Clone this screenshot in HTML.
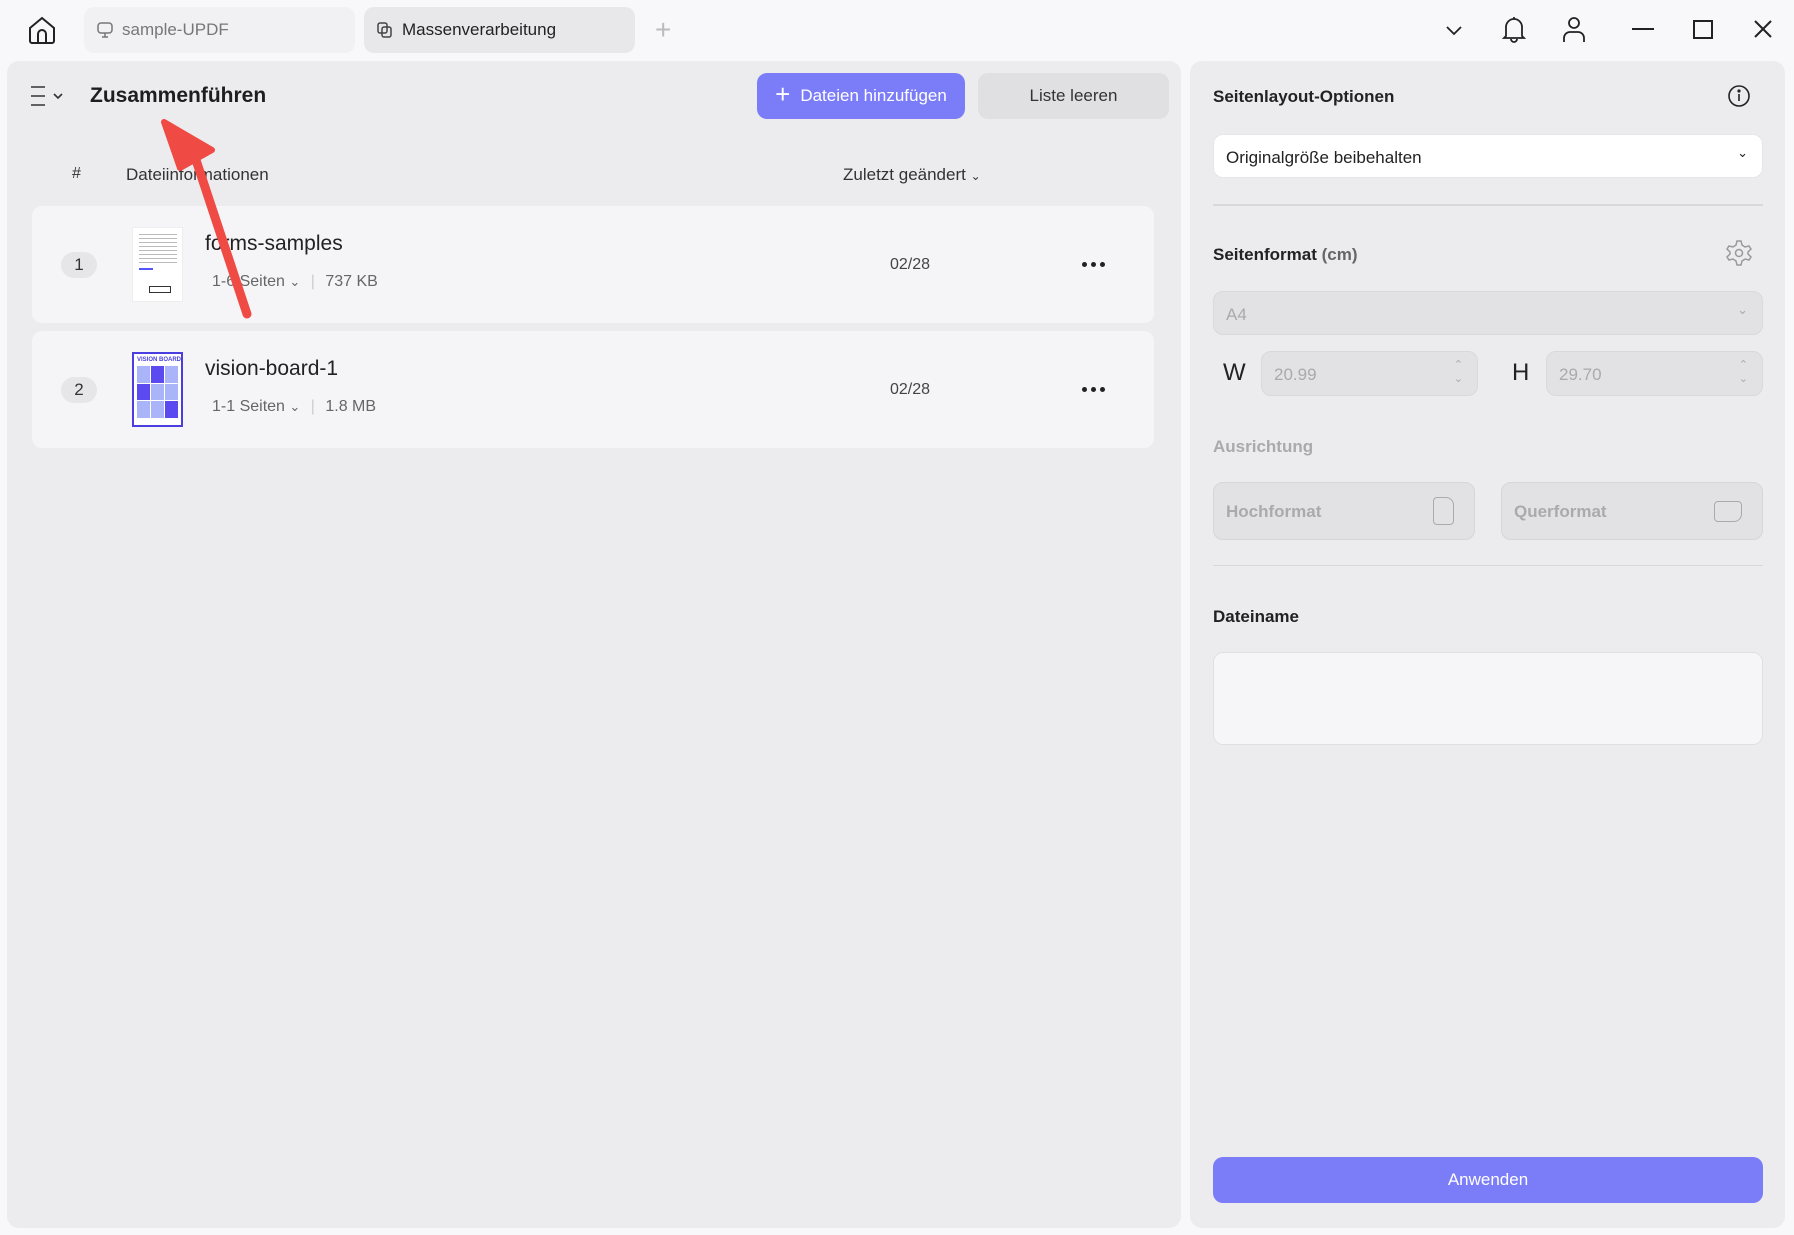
<!DOCTYPE html>
<html><head><meta charset="utf-8"><style>
*{box-sizing:border-box;margin:0;padding:0}
body{width:1794px;height:1235px;background:#f8f8fa;font-family:"Liberation Sans",sans-serif;color:#222;position:relative;overflow:hidden;font-size:17px}
.a{position:absolute}
.tab{position:absolute;top:7px;height:46px;border-radius:10px;display:flex;align-items:center;padding-left:12px;font-size:17px}
.panel{position:absolute;background:#ececee;border-radius:12px}
.row{position:absolute;left:32px;width:1122px;height:117px;background:#f5f5f7;border-radius:10px}
.badge{position:absolute;left:29px;top:46px;width:36px;height:26px;border-radius:13px;background:#e6e6e8;text-align:center;line-height:26px;font-size:17px;color:#333}
.name{position:absolute;left:173px;font-size:21px;color:#222}
.meta{position:absolute;left:180px;font-size:16px;color:#666}
.date{position:absolute;left:858px;font-size:16px;color:#444}
.dots{position:absolute;left:1050px;top:56px;display:flex;gap:4px}
.dots i{width:5px;height:5px;border-radius:50%;background:#222;display:block}
.h{position:absolute;left:1213px;font-weight:bold;font-size:17px;color:#222}
.box{position:absolute;border-radius:10px}
</style></head><body>
<svg class="a" style="left:27px;top:15px" width="30" height="30" viewBox="0 0 30 30" fill="none" stroke="#222" stroke-width="2"><path d="M3 13 L15 3 L27 13 V26 a2 2 0 0 1 -2 2 H5 a2 2 0 0 1 -2 -2Z"/><path d="M11 28 V19 a4 4 0 0 1 8 0 V28"/></svg>
<div class="tab" style="left:84px;width:271px;background:#f1f1f3;color:#777"><svg width="18" height="18" viewBox="0 0 18 18" fill="none" stroke="#777" stroke-width="1.5"><rect x="2" y="2" width="14" height="10" rx="3"/><path d="M9 12v4M6 16h6"/></svg><span style="margin-left:8px">sample-UPDF</span></div>
<div class="tab" style="left:364px;width:271px;background:#e8e8ea;color:#222"><svg width="18" height="18" viewBox="0 0 18 18" fill="none" stroke="#444" stroke-width="1.5"><rect x="2" y="2" width="9" height="10" rx="2"/><rect x="6" y="6" width="9" height="10" rx="2"/></svg><span style="margin-left:8px">Massenverarbeitung</span></div>
<div class="a" style="left:655px;top:14px;font-size:28px;color:#bbb;font-weight:300">+</div>
<svg class="a" style="left:1443px;top:20px" width="22" height="20" viewBox="0 0 22 20" fill="none" stroke="#222" stroke-width="1.8"><path d="M4 7l7 7 7-7"/></svg>
<svg class="a" style="left:1500px;top:14px" width="28" height="30" viewBox="0 0 28 30" fill="none" stroke="#222" stroke-width="1.8"><path d="M14 3v2M6 22V13a8 8 0 0 1 16 0v9l2 2H4z"/><path d="M11 25a3 3 0 0 0 6 0"/></svg>
<svg class="a" style="left:1561px;top:15px" width="26" height="28" viewBox="0 0 26 28" fill="none" stroke="#222" stroke-width="1.8"><circle cx="13" cy="8" r="5"/><path d="M3 27v-4a6 6 0 0 1 6-6h8a6 6 0 0 1 6 6v4"/></svg>
<div class="a" style="left:1632px;top:28px;width:22px;height:2px;background:#222"></div>
<div class="a" style="left:1693px;top:20px;width:20px;height:19px;border:2px solid #222"></div>
<svg class="a" style="left:1753px;top:19px" width="20" height="20" viewBox="0 0 20 20" stroke="#222" stroke-width="2"><path d="M2 2l16 16M18 2L2 18"/></svg>

<div class="panel" style="left:7px;top:61px;width:1174px;height:1167px"></div>
<svg class="a" style="left:30px;top:85px" width="36" height="22" viewBox="0 0 36 22" fill="none" stroke="#333" stroke-width="1.6"><path d="M1 2h14M1 11h14M1 20h14M24 9l4 4 4-4"/></svg>
<div class="a" style="left:90px;top:84px;font-size:21px;font-weight:bold;color:#1e1e1e">Zusammenführen</div>
<div class="box" style="left:757px;top:73px;width:208px;height:46px;background:#7b7cf8;color:#fff;display:flex;align-items:center;justify-content:center;font-size:17px"><span style="font-size:26px;font-weight:300;margin-right:10px;margin-top:-3px">+</span>Dateien hinzufügen</div>
<div class="box" style="left:978px;top:73px;width:191px;height:46px;background:#e0e0e2;display:flex;align-items:center;justify-content:center;font-size:17px;color:#333">Liste leeren</div>
<div class="a" style="left:72px;top:165px;font-size:16px;color:#333">#</div>
<div class="a" style="left:126px;top:165px;font-size:17px;color:#333">Dateiinformationen</div>
<div class="a" style="left:843px;top:165px;font-size:17px;color:#333">Zuletzt geändert <span style="font-size:12px">&#8964;</span></div>

<div class="row" style="top:206px">
<div class="badge">1</div>
<div class="a" style="left:100px;top:21px;width:51px;height:75px;background:#fff;border:1px solid #eee">
<div class="a" style="left:6px;top:6px;width:38px;height:30px;background:repeating-linear-gradient(#bbb 0 1px,#fff 1px 4px)"></div>
<div class="a" style="left:6px;top:40px;width:14px;height:2px;background:#55f"></div>
<div class="a" style="left:16px;top:58px;width:22px;height:7px;border:1px solid #333"></div></div>
<div class="name" style="top:26px">forms-samples</div>
<div class="meta" style="top:67px">1-6 Seiten <span style="font-size:13px">&#8964;</span> <span style="color:#ccc;margin:0 6px">|</span> 737 KB</div>
<div class="date" style="top:50px">02/28</div>
<div class="dots"><i></i><i></i><i></i></div>
</div>
<div class="row" style="top:331px">
<div class="badge">2</div>
<div class="a" style="left:100px;top:21px;width:51px;height:75px;background:#fff;border:2px solid #4a3ee0;padding:3px">
<div style="font-size:6px;color:#4a3ee0;font-weight:bold;text-align:center;white-space:nowrap">VISION BOARD</div>
<div style="display:grid;grid-template-columns:repeat(3,1fr);gap:1px;margin-top:3px;height:52px">
<div style="background:#aab4f8"></div><div style="background:#5a4af0"></div><div style="background:#aab4f8"></div>
<div style="background:#5a4af0"></div><div style="background:#aab4f8"></div><div style="background:#aab4f8"></div>
<div style="background:#aab4f8"></div><div style="background:#aab4f8"></div><div style="background:#5a4af0"></div></div></div>
<div class="name" style="top:26px">vision-board-1</div>
<div class="meta" style="top:67px">1-1 Seiten <span style="font-size:13px">&#8964;</span> <span style="color:#ccc;margin:0 6px">|</span> 1.8 MB</div>
<div class="date" style="top:50px">02/28</div>
<div class="dots"><i></i><i></i><i></i></div>
</div>

<svg class="a" style="left:0;top:0" width="400" height="400" viewBox="0 0 400 400"><path d="M247 314 L196 160" stroke="#ef4a44" stroke-width="9" stroke-linecap="round"/><path d="M164 122 L212 150 L180 168Z" fill="#ef4a44" stroke="#ef4a44" stroke-width="6" stroke-linejoin="round"/></svg>

<div class="panel" style="left:1190px;top:61px;width:595px;height:1167px"></div>
<div class="h" style="top:87px">Seitenlayout-Optionen</div>
<svg class="a" style="left:1727px;top:84px" width="24" height="24" viewBox="0 0 24 24" fill="none" stroke="#222" stroke-width="1.6"><circle cx="12" cy="12" r="10"/><path d="M12 10v7"/><circle cx="12" cy="7" r="0.8" fill="#222"/></svg>
<div class="box" style="left:1213px;top:134px;width:550px;height:44px;background:#fff;border:1px solid #e6e6e8;padding:13px 12px;font-size:17px">Originalgröße beibehalten<span class="a" style="right:14px;top:10px;font-size:13px">&#8964;</span></div>
<div class="a" style="left:1213px;top:204px;width:550px;height:2px;background:#d8d8da"></div>
<div class="h" style="top:245px">Seitenformat <span style="color:#666">(cm)</span></div>
<svg class="a" style="left:1725px;top:239px" width="28" height="28" viewBox="0 0 28 28" fill="none" stroke="#999" stroke-width="1.5"><path d="M12 2h4l1 4 3 2 4-1 2 3-3 3v2l3 3-2 3-4-1-3 2-1 4h-4l-1-4-3-2-4 1-2-3 3-3v-2l-3-3 2-3 4 1 3-2z"/><circle cx="14" cy="14" r="3.5"/></svg>
<div class="box" style="left:1213px;top:291px;width:550px;height:44px;background:#e2e2e4;border:1px solid #d9d9db;padding:13px 12px;color:#aaa">A4<span class="a" style="right:14px;top:10px;font-size:13px">&#8964;</span></div>
<div class="a" style="left:1223px;top:359px;font-size:24px;color:#222;font-weight:300">W</div>
<div class="box" style="left:1261px;top:351px;width:217px;height:45px;background:#e2e2e4;border:1px solid #d9d9db;padding:13px 12px;color:#aaa">20.99<span class="a" style="right:14px;top:6px;font-size:11px;line-height:14px;color:#aaa">&#8963;<br>&#8964;</span></div>
<div class="a" style="left:1512px;top:359px;font-size:24px;color:#222;font-weight:300">H</div>
<div class="box" style="left:1546px;top:351px;width:217px;height:45px;background:#e2e2e4;border:1px solid #d9d9db;padding:13px 12px;color:#aaa">29.70<span class="a" style="right:14px;top:6px;font-size:11px;line-height:14px;color:#aaa">&#8963;<br>&#8964;</span></div>
<div class="h" style="top:437px;color:#aaa">Ausrichtung</div>
<div class="box" style="left:1213px;top:482px;width:262px;height:58px;background:#e2e2e4;border:1px solid #d6d6d8;padding:19px 12px;color:#aaa;font-weight:bold">Hochformat<div class="a" style="right:20px;top:14px;width:21px;height:28px;border:1.5px solid #aaa;border-radius:4px 8px 4px 4px"></div></div>
<div class="box" style="left:1501px;top:482px;width:262px;height:58px;background:#e2e2e4;border:1px solid #d6d6d8;padding:19px 12px;color:#aaa;font-weight:bold">Querformat<div class="a" style="right:20px;top:18px;width:28px;height:21px;border:1.5px solid #aaa;border-radius:4px 4px 8px 4px"></div></div>
<div class="a" style="left:1213px;top:565px;width:550px;height:1px;background:#d8d8da"></div>
<div class="h" style="top:607px">Dateiname</div>
<div class="box" style="left:1213px;top:652px;width:550px;height:93px;background:#f6f6f8;border:1px solid #e0e0e2"></div>
<div class="box" style="left:1213px;top:1157px;width:550px;height:46px;background:#7b7cf8;color:#fff;text-align:center;line-height:46px;font-size:17px">Anwenden</div>
</body></html>
